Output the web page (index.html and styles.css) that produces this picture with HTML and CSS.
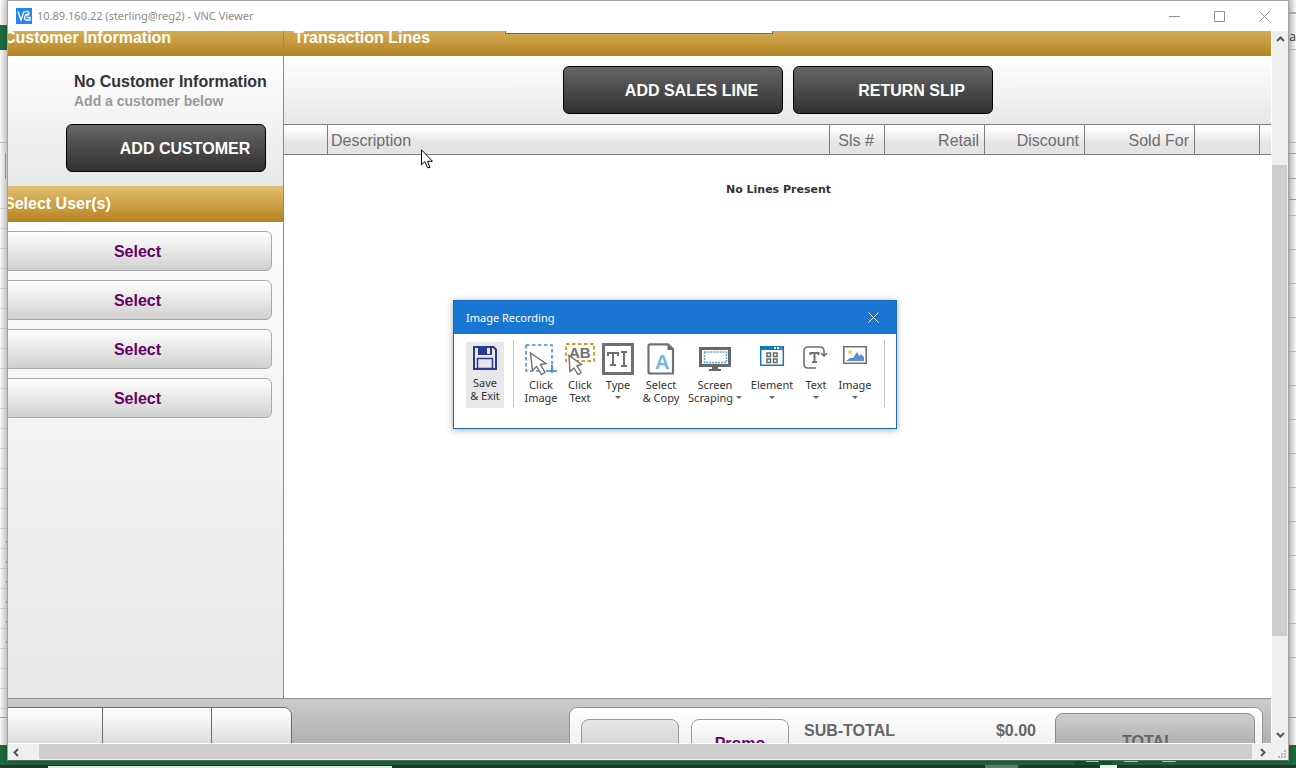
FILE: index.html
```html
<!DOCTYPE html>
<html lang="en">
<head>
<meta charset="utf-8">
<title>VNC Viewer</title>
<link rel="stylesheet" href="styles.css">
</head>
<body>
<div class="desktop">
  <div class="edge edge-left"></div>
  <div class="edge edge-right"><span class="edge-text">na</span></div>
  <div class="statusbar">
    <svg class="status-icons" viewBox="0 0 210 20" width="210" height="20"><path fill="#0f5c2f" d="M0 0h38v20H0z"/><path fill="none" stroke="#d5e3da" d="M12.500 0v16.500h12v-16.500M16.500 0v16M20.500 0v16M50.500 0v16.500h13v-16.500M88.500 0v16.500h13v-16.500"/></svg>
  </div>
  <div class="taskbar"></div>

  <main class="window">
    <header class="titlebar">
      <svg class="vnc-logo" viewBox="0 0 16 16" width="16" height="16"><path fill="#2489ee" d="M0 0h16v16H0z"/><path fill="none" stroke="#fff" stroke-width="1.300" d="M2 3.500l3 8.500 3-8.500"/><path fill="none" stroke="#fff" stroke-width="1.300" d="M8.500 4q4.500-1.500 4.500 1.200 0 1.800-2.200 2-2.300.3-2.300 2.600 0 2.200 2.200 2.200H14V9.500H10.500M9.500 6.500h3"/></svg>
      <h1 class="window-title">10.89.160.22 (sterling@reg2) - VNC Viewer</h1>
      <button class="caption" aria-label="Minimize"><svg viewBox="0 0 11 11" width="11" height="11"><path d="M0 5.500h11"/></svg></button>
      <button class="caption" aria-label="Maximize"><svg viewBox="0 0 11 11" width="11" height="11"><path d="M.5.5h10v10H.5z"/></svg></button>
      <button class="caption" aria-label="Close"><svg viewBox="0 0 11 11" width="11" height="11"><path d="M.5.5l10 10M10.500.5l-10 10"/></svg></button>
    </header>

    <div class="viewport">
      <div class="app">
        <div class="columns">
          <aside class="sidebar">
            <h2 class="bar">Customer Information</h2>
            <section class="customer">
              <p class="customer-name">No Customer Information</p>
              <p class="customer-hint">Add a customer below</p>
              <button class="action">ADD CUSTOMER</button>
            </section>
            <h2 class="bar">Select User(s)</h2>
            <section class="users">
              <button class="user">Select</button>
              <button class="user">Select</button>
              <button class="user">Select</button>
              <button class="user">Select</button>
            </section>
          </aside>
          <section class="lines">
            <h2 class="bar bar-lines">Transaction Lines</h2>
            <div class="toolbar">
              <button class="action action-wide">ADD SALES LINE</button>
              <button class="action">RETURN SLIP</button>
            </div>
            <table class="grid">
              <colgroup><col class="c-mark"><col><col class="c-sls"><col class="c-money"><col class="c-money"><col class="c-sold"><col class="c-extra"><col class="c-end"></colgroup>
              <thead><tr><th></th><th class="left">Description</th><th class="center">Sls #</th><th>Retail</th><th>Discount</th><th>Sold For</th><th></th><th></th></tr></thead>
              <tbody><tr><td colspan="8">No Lines Present</td></tr></tbody>
            </table>
          </section>
          <div class="drop-tab"></div>
        </div>
        <footer class="footer">
          <div class="tabs"><button class="tab" aria-label="Tab 1"></button><button class="tab" aria-label="Tab 2"></button><button class="tab" aria-label="Tab 3"></button></div>
          <div class="totals">
            <button class="promo promo-off" aria-label="Promotion"></button>
            <button class="promo">Promo</button>
            <p class="subtotal"><span>SUB-TOTAL</span><span>$0.00</span></p>
            <button class="total">TOTAL</button>
          </div>
        </footer>
      </div>
    </div>

    <div class="vscroll">
      <button class="arrow" aria-label="Scroll up"><svg viewBox="0 0 9 6" width="9" height="6"><path d="M1 5l3.500-3.500L8 5"/></svg></button>
      <div class="vtrack"><div class="vthumb"></div></div>
      <button class="arrow" aria-label="Scroll down"><svg viewBox="0 0 9 6" width="9" height="6"><path d="M1 1l3.500 3.500L8 1"/></svg></button>
    </div>
    <div class="hscroll">
      <button class="arrow" aria-label="Scroll left"><svg viewBox="0 0 6 9" width="6" height="9"><path d="M5 1L1.500 4.500 5 8"/></svg></button>
      <div class="htrack"><div class="hthumb"></div></div>
      <button class="arrow" aria-label="Scroll right"><svg viewBox="0 0 6 9" width="6" height="9"><path d="M1 1l3.500 3.500L1 8"/></svg></button>
    </div>
    <div class="corner"><svg viewBox="0 0 8 8" width="8" height="8"><path fill="#b8b8b8" d="M6 0h2v2H6zM3 3h2v2H3zM6 3h2v2H6zM0 6h2v2H0zM3 6h2v2H3zM6 6h2v2H6z"/></svg></div>
  </main>

  <svg class="cursor" viewBox="0 0 12 20" width="12" height="20"><path fill="#fff" stroke="#000" d="M.5.8v15l3.300-3.200 2.700 6h2.500l-2.500-6.300h5z"/></svg>

  <section class="dialog" role="dialog" aria-label="Image Recording">
    <header class="dialog-title">
      <h2>Image Recording</h2>
      <button class="dialog-close" aria-label="Close"><svg viewBox="0 0 11 11" width="11" height="11"><path d="M.5.5l10 10M10.500.5l-10 10"/></svg></button>
    </header>
    <div class="ribbon">
      <button class="tool save">
        <svg viewBox="0 0 32 32" width="32" height="32"><path fill="#e8e8e8" stroke="#2b3990" stroke-width="2" d="M5 5h19.500l2.500 2.500V27H5z"/><path fill="#2b3990" d="M9 5h14v8H9z"/><path fill="#e8e8e8" d="M18 6h3v6h-3z"/><path fill="#e8e8e8" stroke="#2b3990" stroke-width="1.500" d="M8.500 26.500V16.500h15v10z"/></svg>
        <span>Save<br>&amp; Exit</span></button>
      <i class="rule"></i>
      <div class="tools">
      <button class="tool">
        <svg viewBox="0 0 34 34" width="34" height="34"><path fill="none" stroke="#3a95cf" stroke-width="1.600" stroke-dasharray="3.500 2.500" d="M2 3h26v20M2 3v26h18"/><path stroke="#2489c9" stroke-width="1.600" d="M28 23v8M22 29h6M29 29h4"/><path fill="#fff" stroke="#707074" stroke-width="1.400" d="M6.500 11l2 17.500 4-4 5 8 3.500-2-4.500-8 5.500-1z"/></svg>
        <span>Click<br>Image</span></button>
      <button class="tool">
        <svg viewBox="0 0 34 34" width="34" height="34"><path fill="none" stroke="#dc951c" stroke-width="1.800" stroke-dasharray="3.500 2.500" d="M3 2h28v17H3z"/><text x="6" y="16" class="glyph-ab">AB</text><path fill="#fff" stroke="#707074" stroke-width="1.400" d="M6 13.500l1 16 4-3.500 4 6.500 3-2-4-6.500 4.500-1.500z"/></svg>
        <span>Click<br>Text</span></button>
      <button class="tool">
        <svg viewBox="0 0 34 34" width="34" height="34"><path fill="#fff" stroke="#707074" stroke-width="3" d="M2.500 2.500h29v29h-29z"/><path fill="none" stroke="#707074" stroke-width="2" d="M7 14v-3h10v3M12 11v12M9 23h6M20 10h6M20 24h6M23 10v14"/></svg>
        <span>Type<b class="caret"></b></span></button>
      <button class="tool">
        <svg viewBox="0 0 34 34" width="34" height="34"><path fill="#fff" stroke="#707074" stroke-width="2.200" d="M6 2.300h18l5 5v24.200H6q-1.500 0-1.500-1.500V4q0-1.700 1.500-1.700z"/><path fill="#707074" d="M23.500 2v6h6z"/><text x="11" y="27" class="glyph-a">A</text></svg>
        <span>Select<br>&amp; Copy</span></button>
      <button class="tool">
        <svg viewBox="0 0 34 34" width="34" height="34"><path fill="#fff" stroke="#66676a" stroke-width="3" d="M2.500 6.500h29v17h-29z"/><path fill="none" stroke="#5aa7dc" stroke-width="1.500" stroke-dasharray="2 1" d="M6.500 10h22v10.500h-22z"/><path fill="#66676a" d="M14 25h6v2h3v2H11v-2h3z"/></svg>
        <span>Screen<br>Scraping <b class="caret inline"></b></span></button>
      <button class="tool">
        <svg viewBox="0 0 34 34" width="34" height="34"><path fill="#fff" stroke="#0e7cb8" stroke-width="1.500" d="M5.700 4.700h22.600v18.600H5.700z"/><path fill="#0e7cb8" d="M5 4h24v4H5z"/><path fill="#fff" d="M19 5h2v2h-2zM22 5h2v2h-2z"/><path fill="#e95a65" d="M25 5h2v2h-2z"/><path fill="none" stroke="#66676a" stroke-width="1.500" d="M12 11h3.500v3.500H12zM18.500 11H22v3.500h-3.500zM12 17h3.500v3.500H12zM18.500 17H22v3.500h-3.500z"/></svg>
        <span>Element<b class="caret"></b></span></button>
      <button class="tool">
        <svg viewBox="0 0 34 34" width="34" height="34"><path fill="none" stroke="#707074" stroke-width="1.600" d="M17 26H9q-4 0-4-4V9q0-4 4-4h12q4 0 4 4v5M22 11l3 3 3-3"/><path fill="none" stroke="#707074" stroke-width="2" d="M11.500 13v-2h8v2M15.500 11v9M13 20h5"/></svg>
        <span>Text<b class="caret"></b></span></button>
      <button class="tool">
        <svg viewBox="0 0 34 34" width="34" height="34"><path fill="#fff" stroke="#707074" stroke-width="1.600" d="M5.800 4.800h22.400v16.400H5.800z"/><circle cx="12" cy="10" r="2" fill="#f0cf62"/><path fill="#5b8fcb" d="M8 19l4-3h3l4-6 2.500 4 1.500-2 3 3v4z"/></svg>
        <span>Image<b class="caret"></b></span></button>
      </div>
      <i class="rule"></i>
    </div>
  </section>
</div>
</body>
</html>
```
FILE: styles.css
```css
* { box-sizing: border-box; }
body { margin: 0; font-family: "Liberation Sans", Arial, sans-serif; font-size: 16px; }
h1, h2, p { margin: 0; }
button { margin: 0; padding: 0; font: inherit; border: 0; background: none; color: inherit; }
svg { display: block; flex: none; }

.desktop { position: relative; height: 100vh; overflow: hidden; background: #f1f1f1; }
.edge { position: absolute; top: 0; bottom: 0; width: 8px; }
.edge-left {
  left: 0;
  background:
    linear-gradient(#1e6e42, #1e6e42) 0 25px / 8px 25px no-repeat,
    linear-gradient(#bdbdbd, #bdbdbd) 0 142px / 8px 1px no-repeat,
    linear-gradient(#aaa, #aaa) 5px 153px / 1px 26px no-repeat,
    linear-gradient(#a8a8a8, #a8a8a8) 0 717px / 8px 1px no-repeat,
    repeating-linear-gradient(transparent 0 8px, #d9d9d9 8px 9px, transparent 9px 20px) 0 200px / 8px 510px no-repeat,
    repeating-linear-gradient(transparent 0 2px, #c2a550 2px 4px, transparent 4px 20px) 6px 539px / 1px 105px no-repeat,
    linear-gradient(90deg, #fafafa, #e4e4e4);
}
.edge-right {
  right: 0;
  background:
    linear-gradient(#b2b2b2, #b2b2b2) 0 12px / 8px 2px no-repeat,
    linear-gradient(#c2c2c2, #c2c2c2) 0 49px / 8px 1px no-repeat,
    linear-gradient(#c2c2c2, #c2c2c2) 0 142px / 8px 1px no-repeat,
    linear-gradient(#aaa, #aaa) 0 153px / 8px 1px no-repeat,
    linear-gradient(#aaa, #aaa) 0 178px / 8px 1px no-repeat,
    linear-gradient(#a0a0a0, #a0a0a0) 0 199px / 8px 1px no-repeat,
    linear-gradient(#a0a0a0, #a0a0a0) 0 717px / 8px 1px no-repeat,
    repeating-linear-gradient(transparent 0 15px, #c4c4c4 15px 16px, transparent 16px 34px) 0 200px / 8px 480px no-repeat,
    linear-gradient(90deg, #d2d2d2, #fafafa);
}
.edge-text { position: absolute; top: 30px; right: 0; font: 12px/14px "Open Sans", sans-serif; color: #333; }
.statusbar { position: absolute; left: 0; right: 0; bottom: 3px; height: 20px; background: #1e6b41; }
.status-icons { position: absolute; right: 12px; top: 0; }
.taskbar {
  position: absolute; left: 0; right: 0; bottom: 0; height: 3px;
  background: linear-gradient(#e8e8e8, #e8e8e8) 48px 1px / 344px 2px no-repeat,
    linear-gradient(#f3f3f3, #f3f3f3) 1100px 0 / 17px 3px no-repeat,
    linear-gradient(#6e7773, #6e7773) 985px 0 / 33px 3px no-repeat, #263630;
}

.window {
  position: absolute; top: 0; right: 7px; bottom: 7px; left: 7px;
  display: grid; grid-template: 30px minmax(0, 1fr) 17px / minmax(0, 1fr) 17px;
  border: 1px solid #a3a3a3; border-bottom-color: #4f695c; background: #efefef;
  box-shadow: 0 0 8px #0005;
}
.titlebar { grid-column: 1 / -1; display: flex; align-items: center; padding: 0 1px 0 8px; background: #fff; }
.window-title { flex: 1; margin-left: 5px; font: 11px/16px "Noto Sans", sans-serif; color: #8c8c8c; }
.caption { width: 45px; height: 28px; display: grid; place-items: center; }
.caption path, .dialog-close path { fill: none; stroke: #909090; }

.viewport { overflow: hidden; display: grid; background: #fff; }
.app { display: flex; flex-direction: column; margin: -11px 0 0 -16px; overflow: hidden; }
.columns { flex: 1; position: relative; display: grid; grid-template-columns: 292px minmax(0, 1fr); }
.bar {
  height: 36px; padding-left: 12px; font-size: 16px; line-height: 35px; color: #fff;
  background: linear-gradient(#e2bf70, #b5831f);
}
.bar-lines { padding-left: 10px; }
.drop-tab { position: absolute; left: 513px; top: 0; width: 268px; height: 14px; background: #fff; border: 1px solid #6a6a6a; }

.sidebar { display: flex; flex-direction: column; border-right: 1px solid #8a8a8a; background: #e8e8e8; }
.customer {
  display: flex; flex-direction: column; padding: 16px 17px 14px 82px;
  background: linear-gradient(#fff, #e7e7e7); font-weight: bold;
}
.customer-name { line-height: 20px; color: #333; white-space: nowrap; }
.customer-hint { font-size: 14px; line-height: 18px; color: #999; }
.customer .action { align-self: flex-end; margin-top: 14px; }
.action {
  width: 200px; height: 48px; padding: 2px 0 0 38px; border: 1px solid #000; border-radius: 6px;
  background: linear-gradient(#666, #303030); color: #fff; font-weight: bold;
}
.action-wide { width: 220px; }
.users {
  flex: 1; display: flex; flex-direction: column; gap: 9px; padding: 9px 11px;
  background: linear-gradient(#fdfdfd, #e7e7e7);
}
.user {
  height: 40px; padding-top: 2px; border: 1px solid #a8a8a8; border-radius: 6px;
  background: linear-gradient(#fff, #d0d0d0); color: #606; font-weight: bold;
}

.lines { background: #fff; }
.toolbar {
  display: flex; justify-content: center; gap: 10px; padding: 10px;
  background: linear-gradient(#fff, #e7e7e7);
}
.grid { width: 100%; table-layout: fixed; border-collapse: separate; border-spacing: 0; }
.c-mark { width: 44px; }
.c-sls { width: 55px; }
.c-money { width: 100px; }
.c-sold { width: 110px; }
.c-extra { width: 65px; }
.c-end { width: 11px; }
.grid th {
  height: 31px; padding: 2px 5px 0 3px; text-align: right; font-weight: normal; line-height: 20px; color: #6e6e6e;
  border: 1px solid #7d7d7d; border-width: 1px 1px 1px 0;
  background: linear-gradient(#fff 10%, #e4e4e4 65%);
}
.grid th:last-child { border-right: 0; }
.grid .left { text-align: left; }
.grid .center { text-align: center; }
.grid td { padding: 27px 0 0 2px; text-align: center; font: bold 11px/16px "DejaVu Sans", sans-serif; color: #333; }

.footer {
  display: flex; justify-content: space-between; align-items: flex-start; height: 45px; overflow: hidden;
  padding: 8px 8px 0 0; border-top: 1px solid #8f8f8f; background: linear-gradient(#cbcbcb, #b1b1b1);
}
.tabs { display: flex; width: 300px; height: 60px; border: 1px solid #6a6a6a; border-radius: 8px; overflow: hidden; }
.tab { flex: 0 0 109px; border-right: 1px solid #6a6a6a; background: linear-gradient(#fff, #c8c8c8); }
.tab:first-child { flex-basis: 110px; }
.tab:last-child { flex: 1; border-right: 0; }
.totals {
  display: flex; align-items: flex-start; width: 694px; height: 90px; padding: 0 7px 0 11px;
  border: 1px solid #949494; border-radius: 8px; background: linear-gradient(#fff, #dedede); font-weight: bold;
}
.promo {
  width: 98px; height: 48px; padding-top: 2px; margin: 11px 12px 0 0; border: 1px solid #999; border-radius: 8px;
  background: linear-gradient(#fff, #ddd); color: #606;
}
.promo-off { background: linear-gradient(#e8e8e8, #c4c4c4); }
.subtotal { flex: 1; display: flex; justify-content: space-between; margin: 13px 19px 0 3px; line-height: 20px; color: #666; }
.total {
  width: 200px; height: 56px; margin-top: 5px; padding: 2px 14px 0 0; border: 1px solid #8a8a8a; border-radius: 8px;
  background: linear-gradient(#cecece, #999); color: #666;
}

.vscroll { display: flex; flex-direction: column; border-left: 1px solid #fff; }
.hscroll { display: flex; border-top: 1px solid #fff; }
.arrow { flex: none; display: grid; place-items: center; width: 16px; height: 16px; }
.arrow path { fill: none; stroke: #555; stroke-width: 2; }
.vtrack { flex: 1; padding: 118px 1px 91px 0; display: grid; }
.vthumb, .hthumb { background: #cdcdcd; }
.htrack { flex: 1; padding: 0 3px 1px 15px; display: grid; }
.corner { display: grid; place-items: end; padding: 2px; }

.cursor { position: absolute; left: 421px; top: 149px; }

.dialog {
  position: absolute; left: 453px; top: 300px; width: 444px; height: 129px;
  border: 1px solid #1768b5; background: #fff; box-shadow: 0 1px 7px #0005;
  font-family: "Noto Sans", sans-serif; font-size: 11px; color: #333;
}
.dialog-title { display: flex; align-items: center; justify-content: space-between; height: 33px; padding-left: 12px; background: #1976d2; color: #fff; }
.dialog-title h2 { font-size: 11px; font-weight: normal; line-height: 16px; }
.dialog-close { width: 46px; height: 32px; display: grid; place-items: center; align-self: flex-start; }
.dialog-close path { stroke: #fff; }
.ribbon { display: flex; align-items: flex-start; padding: 6px 11px 0 12px; }
.tools { flex: 1; display: grid; grid-template-columns: 40px 38px 38px 48px 60px 54px 34px 44px; padding: 2px 0 0 7px; }
.rule { flex: none; width: 1px; height: 67px; background: #c6c6c6; }
.tool { display: flex; flex-direction: column; align-items: center; gap: 2px; line-height: 13px; white-space: nowrap; }
.save { width: 38px; height: 66px; margin: 2px 9px 0 0; background: #e8e8e8; }
.caret { display: block; width: 0; margin: 5px auto 0; border: 3px solid transparent; border-top-color: #666; border-bottom: 0; }
.caret.inline { display: inline-block; margin: 0; vertical-align: 3px; }
.glyph-ab { font: bold 15px "Liberation Sans", sans-serif; fill: #707074; }
.glyph-a { font: bold 20px "Liberation Sans", sans-serif; fill: #73b8e4; }
```
